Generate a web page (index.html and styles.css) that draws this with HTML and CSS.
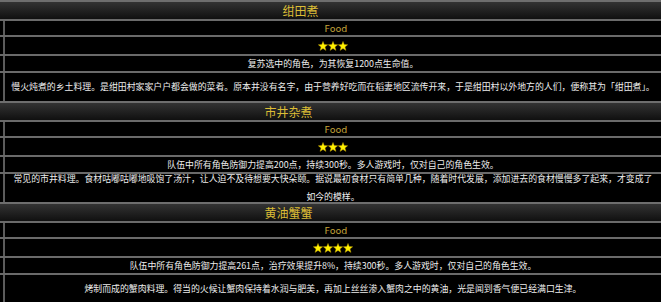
FILE: index.html
```html
<!DOCTYPE html>
<html lang="zh">

<head>
    <meta charset="UTF-8">
    <meta name="viewport" content="width=device-width, initial-scale=1.0">
    <title>料理</title>
    <link rel="stylesheet" href="styles.css">
</head>

<body>
    <svg class="sprite" xmlns="http://www.w3.org/2000/svg">
        <symbol id="star" viewBox="0 0 10 10">
            <polygon points="5,0.4 6.25,3.6 9.7,3.75 7,5.95 7.95,9.4 5,7.45 2.05,9.4 3,5.95 0.3,3.75 3.75,3.6"
                fill="#fff200" stroke="#b89400" stroke-width="0.45" stroke-linejoin="round" />
        </symbol>
    </svg>

    <main class="dish-list">
        <section class="dish">
            <h2 class="dish-name short">绀田煮</h2>
            <div class="dish-row">
                <div class="cell cell-type">Food</div>
            </div>
            <div class="dish-row">
                <div class="cell cell-rank">
                    <svg class="star"><use href="#star" /></svg>
                    <svg class="star"><use href="#star" /></svg>
                    <svg class="star"><use href="#star" /></svg>
                </div>
            </div>
            <div class="dish-row">
                <div class="cell cell-effect">复苏选中的角色，为其恢复1200点生命值。</div>
            </div>
            <div class="dish-row">
                <div class="cell cell-lore">
                    <p>慢火炖煮的乡土料理。是绀田村家家户户都会做的菜肴。原本并没有名字，由于营养好吃而在稻妻地区流传开来，于是绀田村以外地方的人们，便称其为「绀田煮」。</p>
                </div>
            </div>
        </section>

        <section class="dish">
            <h2 class="dish-name long">市井杂煮</h2>
            <div class="dish-row">
                <div class="cell cell-type">Food</div>
            </div>
            <div class="dish-row">
                <div class="cell cell-rank">
                    <svg class="star"><use href="#star" /></svg>
                    <svg class="star"><use href="#star" /></svg>
                    <svg class="star"><use href="#star" /></svg>
                </div>
            </div>
            <div class="dish-row">
                <div class="cell cell-effect">队伍中所有角色防御力提高200点，持续300秒。多人游戏时，仅对自己的角色生效。</div>
            </div>
            <div class="dish-row">
                <div class="cell cell-lore">
                    <p>常见的市井料理。食材咕嘟咕嘟地吸饱了汤汁，让人迫不及待想要大快朵颐。据说最初食材只有简单几种，随着时代发展，添加进去的食材慢慢多了起来，才变成了<br>如今的模样。</p>
                </div>
            </div>
        </section>

        <section class="dish">
            <h2 class="dish-name long">黄油蟹蟹</h2>
            <div class="dish-row">
                <div class="cell cell-type">Food</div>
            </div>
            <div class="dish-row">
                <div class="cell cell-rank">
                    <svg class="star"><use href="#star" /></svg>
                    <svg class="star"><use href="#star" /></svg>
                    <svg class="star"><use href="#star" /></svg>
                    <svg class="star"><use href="#star" /></svg>
                </div>
            </div>
            <div class="dish-row">
                <div class="cell cell-effect">队伍中所有角色防御力提高261点，治疗效果提升8%，持续300秒。多人游戏时，仅对自己的角色生效。</div>
            </div>
            <div class="dish-row">
                <div class="cell cell-lore">
                    <p>烤制而成的蟹肉料理。得当的火候让蟹肉保持着水润与肥美，再加上丝丝渗入蟹肉之中的黄油，光是闻到香气便已经满口生津。</p>
                </div>
            </div>
        </section>
    </main>
</body>

</html>
```

FILE: styles.css
```css
body {
    margin: 0;
    background-color: #000000;
    color: #ededed;
    font-family: "DejaVu Sans", "Noto Sans CJK SC", sans-serif;
    font-size: 8.9px;
    overflow: hidden;
}

.sprite {
    display: none;
}

.dish {
    border-top: 2px solid #6e6e6e;
}

.dish-name {
    margin: 0;
    height: 17px;
    line-height: 17px;
    font-family: "Noto Sans CJK SC", sans-serif;
    font-size: 12px;
    font-weight: normal;
    text-align: center;
    color: #dcbd36;
    background: linear-gradient(#333333, #101010);
    border-bottom: 2px solid #6a6a6a;
}

/* the names sit a little left of centre */
.dish-name.short {
    padding-right: 60px;
}

.dish-name.long {
    padding-right: 84px;
}

.dish-row {
    padding-left: 3px;
    border-bottom: 2px solid #6a6a6a;
}

.dish-row:last-child {
    border-bottom: none;
}

.cell {
    display: flex;
    align-items: center;
    justify-content: center;
    text-align: center;
    border-left: 2px solid #5c5c5c;
}

.cell-type {
    height: 14px;
    padding-left: 6px;
    font-size: 9.5px;
    color: #c4a43a;
}

.cell-rank {
    height: 17px;
}

.star {
    width: 10px;
    height: 10px;
}

.cell-effect {
    height: 15px;
    font-family: "Noto Sans CJK SC", "DejaVu Sans", sans-serif;
}

.cell-lore {
    height: 28px;
    line-height: 18px;
    font-family: "Noto Sans CJK SC", "DejaVu Sans", sans-serif;
}

.cell-lore p {
    margin: 0;
}
```
